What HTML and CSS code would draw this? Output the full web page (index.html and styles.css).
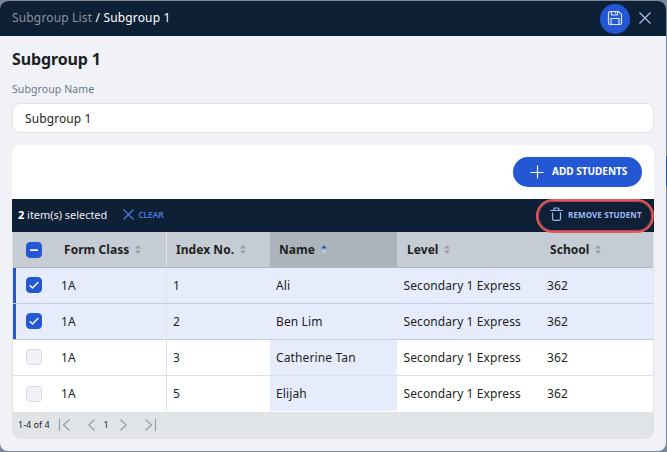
FILE: index.html
```html
<!DOCTYPE html>
<html lang="en">
<head>
<meta charset="utf-8">
<title>Subgroup 1</title>
<link rel="stylesheet" href="styles.css">
</head>
<body>
<div class="modal">
  <header class="topbar">
    <div class="crumbs"><span class="crumb-parent">Subgroup List</span> / Subgroup 1</div>
    <button class="save" aria-label="Save">
      <svg width="16" height="16" viewBox="0 0 16 16"><path d="M3 1.500h8.600l2.900 2.900V13a1.500 1.500 0 0 1-1.500 1.500H3A1.500 1.500 0 0 1 1.500 13V3A1.500 1.500 0 0 1 3 1.500zM4.500 1.500v3.500h6v-3.500M8.500 2v1.500M4 14.500V8.500h8v6"/></svg>
    </button>
    <button class="close" aria-label="Close">
      <svg width="12" height="12" viewBox="0 0 12 12"><path d="M.5.5l11 11M11.500.5l-11 11"/></svg>
    </button>
  </header>
  <main class="content">
    <h1>Subgroup 1</h1>
    <label class="label" for="name">Subgroup Name</label>
    <input class="field" id="name" value="Subgroup 1">
    <section class="card">
      <div class="toolbar">
        <button class="add"><svg width="14" height="14" viewBox="0 0 14 14"><path d="M7.500 .5v13M.5 7.500h13"/></svg><span>ADD STUDENTS</span></button>
      </div>
      <div class="selection">
        <span class="count"><b>2</b> item(s) selected</span>
        <button class="clear"><svg width="11" height="11" viewBox="0 0 11 11"><path d="M.5.5l10 10M10.500.5l-10 10"/></svg><span>CLEAR</span></button>
        <button class="remove"><svg width="13" height="14" viewBox="0 0 13 14"><path d="M.2 3.500h12.600M4 3.200V2q0-1 1-1h3q1 0 1 1v1.200M2.500 5.500v6.300q0 1.500 1.500 1.500h5q1.500 0 1.500-1.500V5.500"/></svg><span>REMOVE STUDENT</span></button>
      </div>
      <div class="table">
        <div class="row head">
          <div class="check"><i class="box on"><svg viewBox="0 0 16 16"><path class="dash" d="M3.500 8h9"/></svg></i></div>
          <div class="cell">Form Class<svg class="sort" viewBox="0 0 6 9"><path d="M.5 3.200L3 .4l2.500 2.800zM.5 5.800L3 8.600l2.500-2.800z"/></svg></div>
          <div class="cell index">Index No.<svg class="sort" viewBox="0 0 6 9"><path d="M.5 3.200L3 .4l2.500 2.800zM.5 5.800L3 8.600l2.500-2.800z"/></svg></div>
          <div class="cell name">Name<svg class="sort" viewBox="0 0 6 9"><path class="asc" d="M.5 3.200L3 .4l2.500 2.800z"/><path class="off" d="M.5 5.800L3 8.600l2.500-2.800z"/></svg></div>
          <div class="cell">Level<svg class="sort" viewBox="0 0 6 9"><path d="M.5 3.200L3 .4l2.500 2.800zM.5 5.800L3 8.600l2.500-2.800z"/></svg></div>
          <div class="cell">School<svg class="sort" viewBox="0 0 6 9"><path d="M.5 3.200L3 .4l2.500 2.800zM.5 5.800L3 8.600l2.500-2.800z"/></svg></div>
        </div>
        <div class="row selected">
          <div class="check"><i class="box on"><svg viewBox="0 0 16 16"><path d="M3 8.300l3.300 3.200 6.700-7"/></svg></i></div>
          <div class="cell">1A</div><div class="cell index">1</div><div class="cell name">Ali</div><div class="cell level">Secondary 1 Express</div><div class="cell">362</div>
        </div>
        <div class="row selected">
          <div class="check"><i class="box on"><svg viewBox="0 0 16 16"><path d="M3 8.300l3.300 3.200 6.700-7"/></svg></i></div>
          <div class="cell">1A</div><div class="cell index">2</div><div class="cell name">Ben Lim</div><div class="cell level">Secondary 1 Express</div><div class="cell">362</div>
        </div>
        <div class="row">
          <div class="check"><i class="box"></i></div>
          <div class="cell">1A</div><div class="cell index">3</div><div class="cell name">Catherine Tan</div><div class="cell level">Secondary 1 Express</div><div class="cell">362</div>
        </div>
        <div class="row last">
          <div class="check"><i class="box"></i></div>
          <div class="cell">1A</div><div class="cell index">5</div><div class="cell name">Elijah</div><div class="cell level">Secondary 1 Express</div><div class="cell">362</div>
        </div>
      </div>
      <footer class="pager">
        <span class="range">1-4 of 4</span>
        <svg class="first" width="12" height="12" viewBox="0 0 12 12"><path d="M1.500 0v12M11.500 .5L5.500 6l6 5.500"/></svg>
        <svg class="prev" width="7" height="12" viewBox="0 0 7 12"><path d="M6.500.5L.8 6l5.700 5.500"/></svg>
        <span class="page">1</span>
        <svg class="next" width="7" height="12" viewBox="0 0 7 12"><path d="M.5.5L6.200 6 .5 11.500"/></svg>
        <svg class="end" width="12" height="12" viewBox="0 0 12 12"><path d="M10.500 0v12M.5 .5L6.500 6l-6 5.500"/></svg>
      </footer>
    </section>
  </main>
</div>
</body>
</html>
```
FILE: styles.css
```css
* { box-sizing: border-box; }
body {
  margin: 0;
  width: 667px;
  height: 452px;
  padding: 1px 1px 1px 0;
  overflow: hidden;
  background: linear-gradient(#285392, #285392) right 156px / 1px 30px no-repeat #7b8796;
  font-family: "Noto Sans", sans-serif;
  font-size: 12px;
  color: #1d1f22;
}
button { border: 0; padding: 0; background: none; font: inherit; display: flex; align-items: center; }
svg { display: block; fill: none; stroke: currentColor; stroke-width: 1.200; flex: none; }
.modal { height: 450px; border-radius: 8px; overflow: hidden; background: #f1f2f7; }
.topbar { height: 35px; display: flex; align-items: center; padding: 0 15px 0 12px; background: #0e2036; color: #fff; }
.crumbs { flex: 1; letter-spacing: .16px; padding-bottom: 2px; }
.crumb-parent { color: #8a929d; }
.save { width: 30px; height: 30px; justify-content: center; border-radius: 50%; background: #2457d3; color: #dbe5fb; margin-right: 9px; }
.save svg { margin-bottom: 1px; }
.close { color: #a9c0f3; padding-bottom: 1px; }
.content { padding: 12px; }
h1 { margin: 0; font-size: 16px; line-height: 22px; letter-spacing: -.12px; }
.label { display: block; margin-top: 11px; font-size: 10.500px; line-height: 16px; color: #69778a; letter-spacing: .1px; }
.field { display: block; width: 642px; height: 30px; margin-top: 6px; padding: 0 12px; border: 1px solid #dfe2e6; border-radius: 8px; background: #fff; font: 12px "Noto Sans", sans-serif; letter-spacing: .1px; color: #1d1f22; }
.card { width: 642px; height: 294px; margin-top: 12px; border-radius: 8px; overflow: hidden; background: #fff; }
.toolbar { height: 54px; display: flex; justify-content: flex-end; padding: 12px 12px 0; }
.add { width: 129px; height: 30px; padding-left: 17px; gap: 8px; border-radius: 15px; background: #2457d3; color: #fff; font-size: 10px; font-weight: 700; }
.add span { padding-bottom: 2px; }
.selection { height: 33px; display: flex; align-items: center; padding-left: 6px; background: #0e2036; color: #e9edf3; font-size: 11px; }
.count { padding-bottom: 2px; letter-spacing: -.04px; }
.count b { color: #fff; }
.clear { margin-left: 16px; gap: 4px; padding-bottom: 2px; color: #4c7ae0; font-size: 8.500px; font-weight: 600; letter-spacing: -.1px; }
.remove { width: 118px; height: 34px; margin-left: auto; padding-left: 12px; gap: 5px; border: 2px solid #e4575b; box-shadow: inset 0 0 0 1px #a9484f; border-radius: 17px; color: #a0b9f3; font-size: 8px; font-weight: 700; letter-spacing: .13px; }
.remove svg { margin-bottom: 3px; }
.remove span { padding-bottom: 2px; }
.table { border: solid #dfe2e6; border-width: 0 1px; }
.row { height: 36px; display: grid; grid-template-columns: 42px 111px 104px 127px 144px 112px; border-bottom: 1px solid #dcdfe3; letter-spacing: .13px; }
.cell { display: flex; align-items: center; padding-left: 6px; }
.level { padding-left: 6.500px; letter-spacing: .1px; }
.index { border-left: 1px solid #dfe2e6; }
.name { background: #e6ecfb; }
.head { background: #c6ccd3; border-color: #b0b7c2; font-weight: 700; letter-spacing: .05px; }
.head .cell { padding-left: 9px; }
.head .name { background: #acb4bb; }
.head .name + .cell { padding-left: 10px; }
.selected { background: #e6ecfb; border-color: #c7cddd; box-shadow: inset 3px 0 #2457d3; }
.last { border-bottom-color: transparent; }
.check { display: flex; align-items: center; padding-left: 13px; }
.box { width: 16px; height: 16px; border: 1px solid #d6dbe1; border-radius: 4px; background: #f1f2f6; }
.row:not(.head):not(.last) .box { margin-bottom: 1px; }
.box svg { width: 14px; height: 14px; stroke: #fff; stroke-width: 1.500; }
.box .dash { stroke-width: 2; }
.box.on { background: #2457d3; border-color: #2457d3; }
.sort { width: 6px; height: 9px; margin-left: 6px; fill: #929ba7; stroke: #929ba7; stroke-width: .4; }
.sort .asc { fill: #2457d3; stroke: #2457d3; }
.sort .off { fill: #c6ccd3; stroke: #c6ccd3; }
.pager { height: 27px; display: flex; align-items: center; padding: 0 0 1px 6px; background: #e0e4e7; color: #929cab; font-size: 9px; }
.range, .page { color: #1d1f22; padding-bottom: 1px; }
.first { margin-left: 8px; }
.prev { margin-left: 18px; }
.page { margin-left: 9px; }
.next { margin-left: 11px; }
.end { margin-left: 18px; }
```
